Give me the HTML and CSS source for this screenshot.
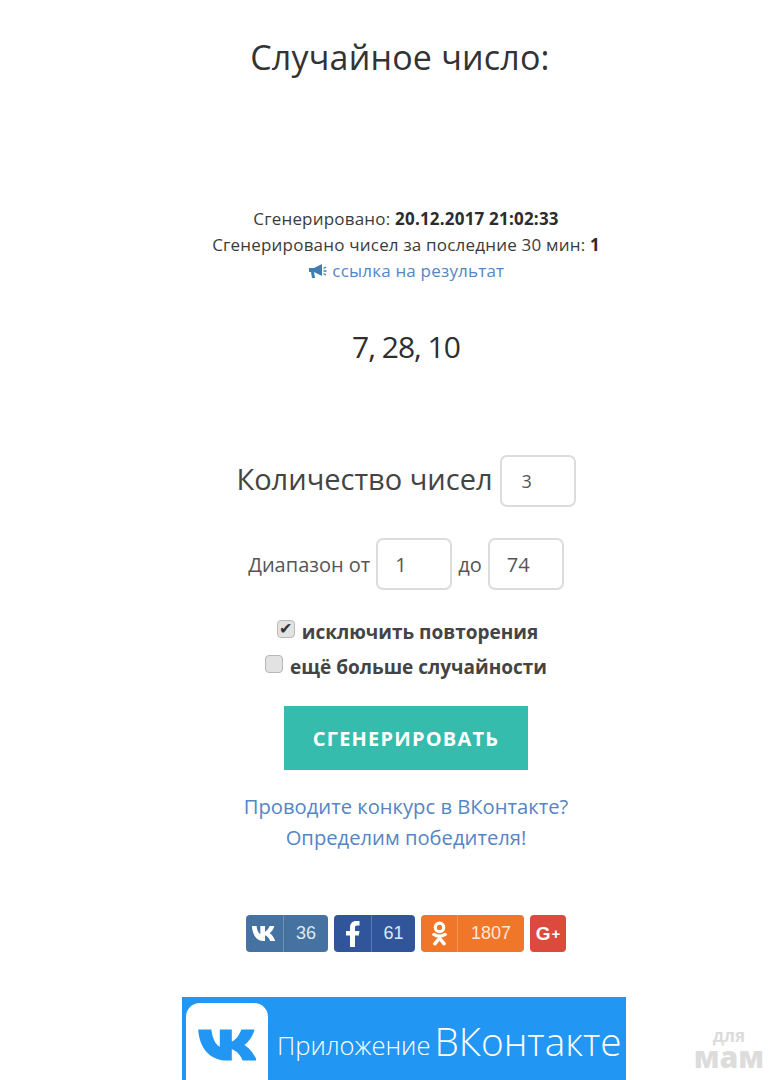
FILE: index.html
```html
<!DOCTYPE html>
<html lang="ru">
<head>
<meta charset="utf-8">
<title>Случайное число</title>
<link rel="stylesheet" href="styles.css">
</head>
<body>
<main class="page">
  <h1 class="title">Случайное число:</h1>
  <section class="meta">
    <p>Сгенерировано: <b>20.12.2017 21:02:33</b></p>
    <p>Сгенерировано чисел за последние 30 мин: <b>1</b></p>
    <p><a class="link" href="#"><svg class="horn" viewBox="0 0 20 16" width="20" height="16"><path d="M1 5h5l8-4v12l-8-4H6l1 6H4L3 9H1z" fill="#3f7db5"/><path d="M15.500 5.500 18 4M15.500 8h3M15.500 10.500 18 12" stroke="#3f7db5" stroke-width="1.300" fill="none"/></svg> ссылка на результат</a></p>
  </section>
  <div class="result">7, 28, 10</div>
  <form class="form">
    <div class="row row-count"><label class="count-label">Количество чисел</label><span class="field">3</span></div>
    <div class="row row-range"><label>Диапазон от</label><span class="field">1</span><label>до</label><span class="field">74</span></div>
    <label class="check check-a"><input type="checkbox" checked> исключить повторения</label>
    <label class="check check-b"><input type="checkbox"> ещё больше случайности</label>
    <button class="go" type="button">СГЕНЕРИРОВАТЬ</button>
  </form>
  <p class="promo"><a href="#">Проводите конкурс в ВКонтакте?<br>Определим победителя!</a></p>
  <div class="shares">
    <a class="share vk"><span class="ico"><svg viewBox="0 0 30 18" width="28" height="17"><path d="M1 1h5c.5 5 2.500 8 4 8.500V1h5v6c2-.5 4-3.500 5-6h5c-.8 3.500-3.300 6.500-5 7.800 2 1 4.500 4 6 8.200h-5.500c-1-3-3.500-5.500-5.500-6v6h-2C6 17 1.500 10.500 1 1z" fill="#fff"/></svg></span><span class="num">36</span></a>
    <a class="share fb"><span class="ico"><svg viewBox="0 0 14 26" width="14" height="26"><path d="M4 26V14.500H0V10h4V6.500C4 2.500 6.500 0 10 0h3.500v4.500H11c-1.500 0-2 .8-2 2V10h4.500l-.7 4.500H9V26z" fill="#fff"/></svg></span><span class="num">61</span></a>
    <a class="share ok"><span class="ico"><svg viewBox="0 0 16 26" width="15" height="25"><circle cx="8" cy="6.500" r="4.500" fill="none" stroke="#fff" stroke-width="3.400"/><path d="M2 14c3.500 2.300 8.500 2.300 12 0M8 16v2M8 18l-5 6M8 18l5 6" fill="none" stroke="#fff" stroke-width="3.600" stroke-linecap="round"/></svg></span><span class="num">1807</span></a>
    <a class="share gp"><b>G</b><i>+</i></a>
  </div>
  <div class="banner">
    <span class="tile"><svg viewBox="0 0 48 30" width="58" height="36"><path d="M0 2h11c.8 8 4 13 7 14.500V2h10v10c3-.8 6-5 8-10h11c-1.500 5.500-5 10.500-8.500 13 3.500 2 8 7 10.500 13H37c-1.800-5-5-8-9-9.500V28h-3C10 28 1 18 0 2z" fill="#2196f3"/></svg></span>
    <span class="small">Приложение</span><span class="big">ВКонтакте</span>
  </div>
</main>
<div class="mark"><span>для</span><b>мам</b></div>
</body>
</html>
```
FILE: styles.css
```css
* { box-sizing: border-box; }
html, body { margin: 0; height: 1080px; overflow: hidden; background: #fff; }
body { font-family: "Open Sans", "Liberation Sans", sans-serif; color: #3b3b3b; position: relative; }
p { margin: 0; }
a { color: #5585c5; text-decoration: none; }
.page { width: 778px; display: flex; flex-direction: column; align-items: center; padding-left: 34px; }
.title { margin: 35px 0 0 -12px; font-size: 34px; line-height: 44px; font-weight: 400; letter-spacing: .2px; color: #333; white-space: nowrap; }
.meta { margin-top: 127px; text-align: center; font-size: 17px; line-height: 26px; letter-spacing: .2px; white-space: nowrap; }
.meta b { font-weight: 700; color: #2c2c2c; }
.horn { vertical-align: -2px; }
.result { margin-top: 41px; font-size: 30px; line-height: 44px; letter-spacing: -1px; color: #2e2e2e; }
.form { margin-top: 86px; display: flex; flex-direction: column; align-items: center; }
.row { display: flex; align-items: center; }
.row-count { font-size: 29px; gap: 7px; color: #444; }
.count-label { line-height: 46px; margin-bottom: 5px; }
.row-range { margin-top: 31px; font-size: 20px; gap: 6px; color: #555; }
.field { width: 76px; height: 52px; border: 2px solid #dcdcdc; border-radius: 7px; display: flex; align-items: center; padding-left: 17px; font-size: 20px; color: #555; }
.row-count .field { font-size: 18px; padding-left: 20px; }
.check { display: flex; align-items: center; gap: 7px; font-size: 19px; font-weight: 700; line-height: 35px; color: #444; }
.check input { appearance: none; margin: 0; width: 18px; height: 18px; position: relative; top: -4px; background: #e2e2e2; border: 1px solid #b8b8b8; border-radius: 4px; display: flex; align-items: center; justify-content: center; }
.check input:checked::after { content: "✔"; font-size: 16px; line-height: 1; color: #333; }
.check-a { margin-top: 25px; margin-left: 3px; }
.go { margin-top: 21px; width: 244px; height: 64px; border: 0; background: #36bcac; color: #fff; font: 700 20px "Open Sans", sans-serif; letter-spacing: 1.200px; }
.promo { margin-top: 21px; font-size: 20.200px; line-height: 31px; text-align: center; white-space: nowrap; }
.shares { margin-top: 62px; display: flex; gap: 6px; height: 37px; }
.share { display: flex; align-items: center; height: 37px; border-radius: 4px; color: #dfe8f0; font: 18px "Liberation Sans", sans-serif; }
.ico { display: flex; align-items: center; justify-content: center; height: 100%; border-right: 1px solid rgba(255,255,255,.22); }
.num { flex: 1; text-align: center; }
.vk { width: 82px; background: #4572a0; }
.vk .ico { width: 38px; }
.fb { width: 81px; background: #30559b; }
.fb .ico { width: 38px; }
.ok { width: 103px; background: #f0762a; color: #fbe6d6; }
.ok .ico { width: 37px; }
.gp { width: 36px; background: #dc4a3e; color: #fff; justify-content: center; font-size: 19px; }
.gp i { font-style: normal; font-weight: 700; font-size: 15px; margin-left: 1px; }
.banner { margin-top: 45px; margin-left: -4px; width: 444px; height: 90px; background: #2196f3; color: #fff; display: flex; align-items: flex-start; overflow: hidden; }
.tile { flex: none; width: 82px; height: 95px; margin: 6px 0 0 4px; background: #fff; border-radius: 14px; display: flex; justify-content: center; padding-top: 24px; }
.small { margin: 30px 0 0 9px; font-size: 25.500px; font-weight: 300; line-height: 36px; white-space: nowrap; }
.big { margin: 21px 0 0 4px; font-size: 38.800px; font-weight: 300; line-height: 46px; white-space: nowrap; }
.mark { position: absolute; right: 14px; bottom: 10px; display: flex; flex-direction: column; align-items: center; color: #dcdcdc; }
.mark span { font-size: 17px; font-weight: 700; line-height: 16px; }
.mark b { font-size: 30px; font-weight: 800; line-height: 26px; }
```
